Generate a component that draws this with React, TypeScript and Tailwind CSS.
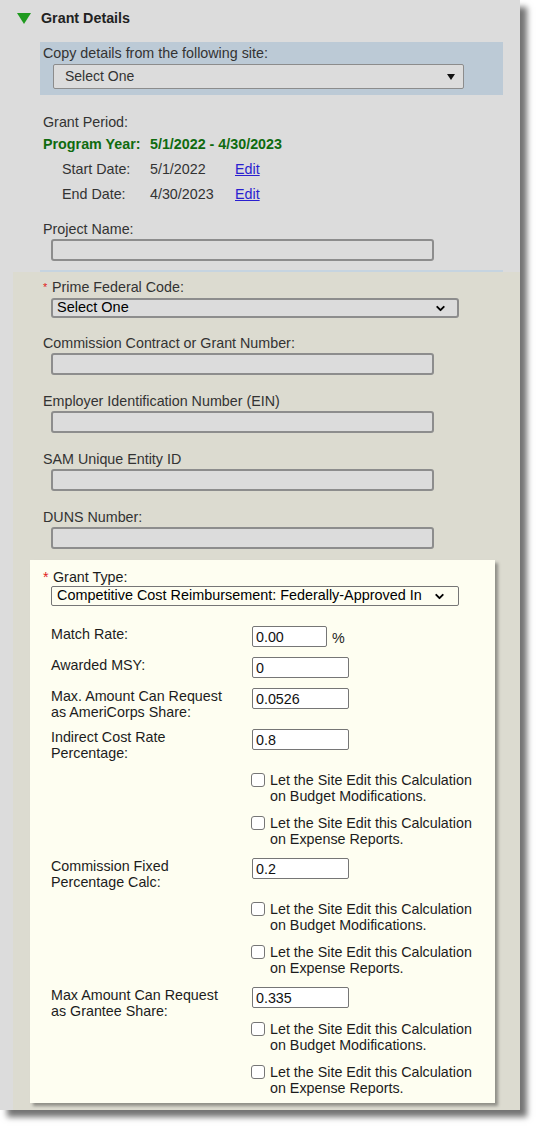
import { ChevronDown } from 'lucide-react';

const grayInput = 'block h-[22px] w-[383px] rounded-[3px] border-2 border-[#8d8d8d] bg-[#dcdcdc]';
const cbText = ['Let the Site Edit this Calculation', 'on Budget Modifications.', 'on Expense Reports.'];

function GrayField({ label, className = '' }: { label: string; className?: string }) {
  return (
    <div className={className}>
      <div className="leading-4 text-[#333]">{label}</div>
      <div className={`${grayInput} mt-[2px] ml-[8px]`} />
    </div>
  );
}

function ValueRow({
  label,
  value,
  narrow,
  suffix,
  className = '',
}: {
  label: React.ReactNode;
  value: string;
  narrow?: boolean;
  suffix?: string;
  className?: string;
}) {
  return (
    <div className={`grid grid-cols-[201px_1fr] leading-4 ${className}`}>
      <div>{label}</div>
      <div className="flex h-[21px] items-start">
        <div
          className={`flex h-[21px] items-center rounded-[2px] border border-[#767676] bg-white pl-[3px] text-[#111] ${
            narrow ? 'w-[75px]' : 'w-[97px]'
          }`}
        >
          {value}
        </div>
        {suffix && <span className="ml-[5px] mt-[4px]">{suffix}</span>}
      </div>
    </div>
  );
}

function CheckRow({ expense, className = '' }: { expense?: boolean; className?: string }) {
  return (
    <div className={`grid grid-cols-[200px_1fr] leading-4 ${className}`}>
      <div />
      <div className="flex items-start gap-[5px]">
        <span className="mt-[1px] block h-[14px] w-[14px] shrink-0 rounded-[3px] border border-[#767676] bg-white" />
        <span>
          {cbText[0]}
          <br />
          {expense ? cbText[2] : cbText[1]}
        </span>
      </div>
    </div>
  );
}

export default function App() {
  return (
    <div className="min-h-[1135px] bg-white font-['Liberation_Sans',Arial,sans-serif] text-[14.3px]">
      <div className="flex h-[1110px] w-[520px] flex-col bg-[#dcdcdc] shadow-[7px_7px_6px_rgba(0,0,0,0.55)]">
        {/* Header */}
        <div className="flex items-center pl-[17px] pt-[10px]">
          <svg width="14" height="11" viewBox="0 0 14 11">
            <polygon points="0,0 14,0 7,11" fill="#1f9a1f" />
          </svg>
          <span className="ml-[10px] font-bold leading-4 text-[#222]">Grant Details</span>
        </div>

        {/* Top section */}
        <div className="ml-[40px] w-[463px] text-[#333]">
          <div className="mt-[16px] h-[53px] bg-[#bccad6] pt-[3px]">
            <div className="pl-[3px] leading-4">Copy details from the following site:</div>
            <div className="ml-[13px] mt-[3px] flex h-[25px] w-[411px] items-center justify-between rounded-[2px] border-[1.5px] border-[#8c8c8c] bg-[#dcdcdc] pl-[11px] pr-[8px] text-[14px]">
              <span>Select One</span>
              <svg width="8" height="6" viewBox="0 0 8 6">
                <polygon points="0,0 8,0 4,6" fill="#111" />
              </svg>
            </div>
          </div>

          <div className="mt-[19px] pl-[3px] leading-4">Grant Period:</div>
          <div className="mt-[6px] flex pl-[3px] font-bold leading-4 text-[#0f6b0f]">
            <span className="w-[107px]">Program Year:</span>
            <span>5/1/2022 - 4/30/2023</span>
          </div>
          <div className="mt-[9px] flex pl-[22px] leading-4">
            <span className="w-[88px]">Start Date:</span>
            <span className="w-[85px]">5/1/2022</span>
            <span className="text-[#2a1fd0] underline">Edit</span>
          </div>
          <div className="mt-[9px] flex pl-[22px] leading-4">
            <span className="w-[88px]">End Date:</span>
            <span className="w-[85px]">4/30/2023</span>
            <span className="text-[#2a1fd0] underline">Edit</span>
          </div>

          <div className="mt-[19px] pl-[3px] leading-4">Project Name:</div>
          <div className={`${grayInput} ml-[11px] mt-[2px]`} />
          <div className="mt-[9px] h-[2px] w-full bg-[#c6d4e0]" />
        </div>

        {/* Beige section */}
        <div className="ml-[13px] flex w-[507px] flex-1 flex-col bg-[#dcdbd0]">
          <div className="pl-[30px] pt-[7px]">
            <div className="flex leading-4 text-[#333]">
              <span className="w-[9px] text-[11px] text-[#e02020]">*</span>
              <span>Prime Federal Code:</span>
            </div>
            <div className="ml-[8px] mt-[3px] flex h-[20px] w-[408px] items-center justify-between rounded-[3px] border-2 border-[#8d8d8d] bg-[#dcdcdc] pl-[4px] pr-[10px] text-[14.5px] text-black">
              <span>Select One</span>
              <ChevronDown size={13} strokeWidth={3.5} />
            </div>

            <GrayField className="mt-[17px]" label="Commission Contract or Grant Number:" />
            <GrayField className="mt-[18px]" label="Employer Identification Number (EIN)" />
            <GrayField className="mt-[18px]" label="SAM Unique Entity ID" />
            <GrayField className="mt-[18px]" label="DUNS Number:" />
          </div>

          {/* Grant type box */}
          <div className="ml-[17px] mt-[11px] w-[465px] bg-[#fefef1] pb-[7px] pt-[9px] text-[#1c1c1c] shadow-[3px_3px_3px_rgba(0,0,0,0.35)]">
            <div className="pl-[13px]">
              <div className="flex leading-4">
                <span className="w-[10px] text-[#e02020]">*</span>
                <span>Grant Type:</span>
              </div>
              <div className="ml-[8px] mt-[1px] flex h-[20px] w-[408px] items-center justify-between rounded-[2px] border border-[#767676] bg-[#fefef1] pl-[5px] pr-[12px] text-[14.4px] text-black">
                <span>Competitive Cost Reimbursement: Federally-Approved In</span>
                <ChevronDown size={13} strokeWidth={3.5} />
              </div>
            </div>

            <div className="pl-[21px]">
              <ValueRow className="mt-[20px]" label="Match Rate:" value="0.00" narrow suffix="%" />
              <ValueRow className="mt-[10px]" label="Awarded MSY:" value="0" />
              <ValueRow
                className="mt-[10px]"
                label={
                  <>
                    Max. Amount Can Request
                    <br />
                    as AmeriCorps Share:
                  </>
                }
                value="0.0526"
              />
              <ValueRow
                className="mt-[9px]"
                label={
                  <>
                    Indirect Cost Rate
                    <br />
                    Percentage:
                  </>
                }
                value="0.8"
              />
              <CheckRow className="mt-[11px]" />
              <CheckRow className="mt-[11px]" expense />
              <ValueRow
                className="mt-[11px]"
                label={
                  <>
                    Commission Fixed
                    <br />
                    Percentage Calc:
                  </>
                }
                value="0.2"
              />
              <CheckRow className="mt-[11px]" />
              <CheckRow className="mt-[11px]" expense />
              <ValueRow
                className="mt-[11px]"
                label={
                  <>
                    Max Amount Can Request
                    <br />
                    as Grantee Share:
                  </>
                }
                value="0.335"
              />
              <CheckRow className="mt-[2px]" />
              <CheckRow className="mt-[11px]" expense />
            </div>
          </div>
        </div>
      </div>
    </div>
  );
}
